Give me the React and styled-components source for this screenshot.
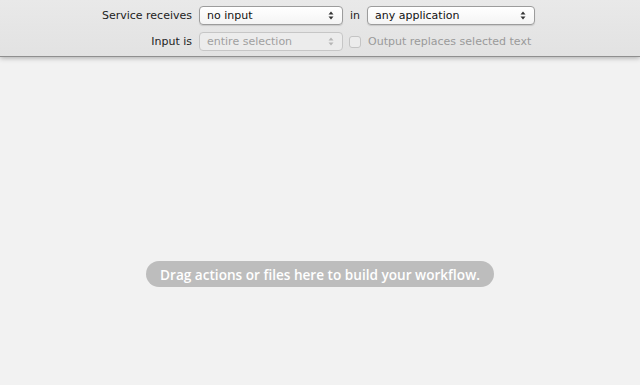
import React from 'react';
import styled, { createGlobalStyle } from 'styled-components';

const GlobalStyle = createGlobalStyle`
  html, body {
    margin: 0;
    padding: 0;
    background: #f2f2f2;
  }
  body {
    font-family: "Lucida Grande", "DejaVu Sans", sans-serif;
    font-size: 11px;
    color: #222;
  }
`;

const App = () => {
  return (
    <>
      <GlobalStyle />
      <Page>
        <Header>
          <Row>
            <Label>Service receives</Label>
            <Select width={144}>
              <span>no input</span>
              <Arrows />
            </Select>
            <Word>in</Word>
            <Select width={168}>
              <span>any application</span>
              <Arrows />
            </Select>
          </Row>
          <Row>
            <Label>Input is</Label>
            <Select width={144} disabled>
              <span>entire selection</span>
              <Arrows disabled />
            </Select>
            <Check />
            <Word disabled>Output replaces selected text</Word>
          </Row>
        </Header>
        <Canvas>
          <Hint>Drag actions or files here to build your workflow.</Hint>
        </Canvas>
      </Page>
    </>
  );
};

const Arrows = ({ disabled }) => (
  <svg width="6" height="9" viewBox="0 0 6 9">
    <path d="M0.5 3.5 L3 0.5 L5.5 3.5 Z" fill={disabled ? '#b5b5b5' : '#333'} />
    <path d="M0.5 5.5 L3 8.5 L5.5 5.5 Z" fill={disabled ? '#b5b5b5' : '#333'} />
  </svg>
);

export default App;

const Page = styled.div`
  width: 640px;
  height: 385px;
  display: flex;
  flex-direction: column;
  overflow: hidden;
`;

const Header = styled.div`
  height: 57px;
  box-sizing: border-box;
  padding-top: 6px;
  background: linear-gradient(#e9e9e9, #e2e2e2);
  border-bottom: 1px solid #8f8f8f;
  box-shadow: 0 1px 5px rgba(0, 0, 0, 0.3);
  display: flex;
  flex-direction: column;
  gap: 7px;
  position: relative;
  z-index: 1;
`;

const Row = styled.div`
  display: flex;
  align-items: center;
  height: 19px;
`;

const Label = styled.div`
  width: 199px;
  text-align: right;
  padding-right: 7px;
  box-sizing: border-box;
  color: #222;
`;

const Word = styled.div`
  padding: 0 7px 0 7px;
  color: ${(p) => (p.disabled ? '#9a9a9a' : '#222')};
`;

const Select = styled.div`
  width: ${(p) => p.width}px;
  height: 19px;
  box-sizing: border-box;
  border: 1px solid ${(p) => (p.disabled ? '#c6c6c6' : '#9c9c9c')};
  border-radius: 4px;
  background: ${(p) =>
    p.disabled ? '#ececec' : 'linear-gradient(#ffffff, #f4f4f4)'};
  box-shadow: ${(p) => (p.disabled ? 'none' : '0 1px 1px rgba(0,0,0,0.12)')};
  display: flex;
  align-items: center;
  justify-content: space-between;
  padding: 0 8px 0 7px;
  color: ${(p) => (p.disabled ? '#a0a0a0' : '#111')};
`;

const Check = styled.div`
  width: 12px;
  height: 12px;
  box-sizing: border-box;
  margin-left: 6px;
  border: 1px solid #c4c4c4;
  border-radius: 3px;
  background: #ececec;
`;

const Canvas = styled.div`
  flex: 1;
  background: #f2f2f2;
  display: flex;
  justify-content: center;
  align-items: flex-start;
  padding-top: 204px;
`;

const Hint = styled.div`
  height: 26px;
  width: 348px;
  box-sizing: border-box;
  border-radius: 13px;
  background: #bdbdbd;
  color: #ffffff;
  font-family: "Open Sans", "DejaVu Sans", sans-serif;
  font-size: 13.6px;
  font-weight: 600;
  display: flex;
  align-items: center;
  justify-content: center;
  white-space: nowrap;
`;
